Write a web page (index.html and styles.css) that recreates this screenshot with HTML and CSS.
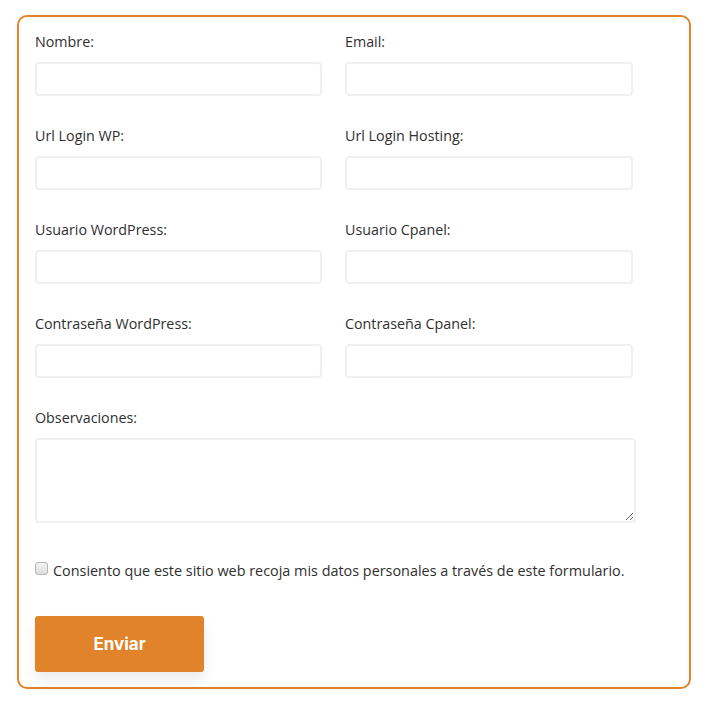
FILE: index.html
```html
<!DOCTYPE html>
<html lang="es">
<head>
<meta charset="utf-8">
<link rel="stylesheet" href="styles.css">
</head>
<body>
<form class="card">
  <div class="grid">
    <div class="field"><label class="lbl">Nombre:</label><input class="inp" type="text"></div>
    <div class="field"><label class="lbl">Email:</label><input class="inp" type="email"></div>
    <div class="field"><label class="lbl">Url Login WP:</label><input class="inp" type="text"></div>
    <div class="field"><label class="lbl">Url Login Hosting:</label><input class="inp" type="text"></div>
    <div class="field"><label class="lbl">Usuario WordPress:</label><input class="inp" type="text"></div>
    <div class="field"><label class="lbl">Usuario Cpanel:</label><input class="inp" type="text"></div>
    <div class="field"><label class="lbl">Contraseña WordPress:</label><input class="inp" type="text"></div>
    <div class="field"><label class="lbl">Contraseña Cpanel:</label><input class="inp" type="text"></div>
  </div>
  <div class="field wide"><label class="lbl">Observaciones:</label><textarea class="area"></textarea></div>
  <label class="consent"><input class="chk" type="checkbox"><span>Consiento que este sitio web recoja mis datos personales a través de este formulario.</span></label>
  <button class="btn" type="button">Enviar</button>
</form>
</body>
</html>
```
FILE: styles.css
```css
html, body { margin: 0; padding: 0; background: #fff; }
body { padding: 15px 19px 18px 17px; font-family: "Open Sans", "Noto Sans", sans-serif; color: #2f2f2f; }
.card {
  border: 2px solid #e0832b;
  border-radius: 10px;
  padding: 15px 16px 15px 16px;
  height: 674px;
  box-sizing: border-box;
}
.grid {
  display: grid;
  grid-template-columns: 287px 288px;
  column-gap: 23px;
}
.field { display: flex; flex-direction: column; margin-bottom: 30px; }
.lbl { font-size: 14.3px; line-height: 20px; margin-bottom: 10px; }
.inp {
  height: 34px;
  box-sizing: border-box;
  border: 2px solid #f0f0f0;
  border-radius: 4px;
  background: #fff;
  margin: 0;
}
.wide { margin-bottom: 0; }
.area {
  width: 601px;
  height: 85px;
  box-sizing: border-box;
  border: 2px solid #f0f0f0;
  border-radius: 4px;
  margin: 0;
  resize: both;
}
.consent { display: flex; align-items: flex-start; gap: 5px; margin-top: 38px; font-size: 14.4px; line-height: 20px; }
.chk {
  appearance: none;
  -webkit-appearance: none;
  flex: none;
  width: 13px;
  height: 13px;
  margin: 1px 0 0;
  border: 1px solid #b5b5b5;
  border-radius: 3px;
  background: linear-gradient(#f2f2f2, #dedede);
  box-sizing: border-box;
}
.btn {
  display: block;
  margin-top: 35px;
  width: 169px;
  height: 56px;
  border: none;
  border-radius: 3px;
  background: #e0832b;
  color: #fff;
  font-family: "Inter", "Lato", sans-serif;
  font-weight: 700;
  font-size: 17px;
  box-shadow: 0 8px 14px rgba(0,0,0,0.08);
}
```
